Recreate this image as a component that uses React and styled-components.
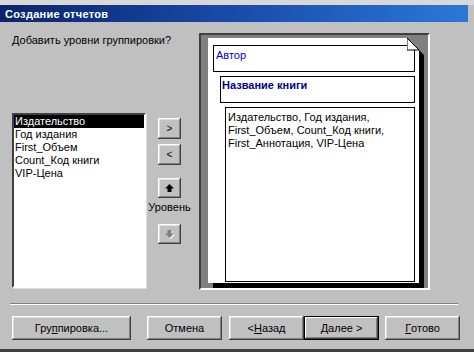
import React, { useState } from "react";
import styled, { createGlobalStyle } from "styled-components";

const GlobalStyle = createGlobalStyle`
  html, body { margin: 0; padding: 0; background: #c0c0c0; }
  * { box-sizing: border-box; }
`;

const Window = styled.div`
  width: 474px;
  height: 352px;
  background: #c0c0c0;
  border-top: 5px solid #d8d8d8;
  border-bottom: 3px solid #404040;
  display: flex;
  flex-direction: column;
  font-family: "Liberation Sans", Arial, sans-serif;
  font-size: 11px;
  color: #000;
`;

const TitleBar = styled.div`
  height: 17px;
  margin-right: 6px;
  padding-left: 5px;
  display: flex;
  align-items: center;
  background: linear-gradient(90deg, #0a246a 0%, #1a50b0 55%, #2a78d6 100%);
  color: #fff;
  font-weight: bold;
  font-size: 11px;
  letter-spacing: 0.3px;
`;

const Body = styled.div`
  display: flex;
  padding: 11px 0 0 12px;
`;

const LeftColumn = styled.div`
  width: 187px;
  display: flex;
  flex-direction: column;
`;

const Prompt = styled.div`
  line-height: 13px;
  margin-top: 1px;
`;

const ListRow = styled.div`
  display: flex;
  margin-top: 66px;
`;

const ListBox = styled.div`
  width: 134px;
  height: 175px;
  background: #fff;
  border-style: solid;
  border-width: 2px;
  border-color: #404040 #fff #fff #404040;
  box-shadow: 1px 1px 0 #dfdfdf;
  padding: 0;
`;

const ListItem = styled.div`
  height: 13px;
  line-height: 13px;
  padding-left: 1px;
  white-space: nowrap;
  background: ${(p) => (p.$selected ? "#000" : "transparent")};
  color: ${(p) => (p.$selected ? "#fff" : "#000")};
`;

const MoveColumn = styled.div`
  width: 47px;
  display: flex;
  flex-direction: column;
  align-items: center;
`;

const SmallButton = styled.div`
  width: 23px;
  height: ${(p) => p.$h || 21}px;
  margin-top: ${(p) => p.$mt || 0}px;
  background: #c0c0c0;
  box-shadow: inset -1px -1px #404040, inset 1px 1px #fff,
    inset -2px -2px #808080, inset 2px 2px #dfdfdf;
  display: flex;
  align-items: center;
  justify-content: center;
  font-size: 10px;
`;

const LevelLabel = styled.div`
  margin-top: 3px;
  line-height: 13px;
`;

const Preview = styled.div`
  width: 231px;
  height: 257px;
  background: #808080;
  border-style: solid;
  border-width: 2px;
  border-color: #404040 #fff #fff #404040;
  padding: 3px 0 0 7px;
`;

const Page = styled.div`
  position: relative;
  width: 211px;
  height: 245px;
  background: #fff;
  box-shadow: 5px 5px 0 #000;
  display: flex;
  flex-direction: column;
  padding: 7px 4px 0 5px;
`;

const Corner = styled.svg`
  position: absolute;
  right: -6px;
  top: 0;
`;

const Section = styled.div`
  margin-left: ${(p) => p.$indent}px;
  height: ${(p) => p.$h}px;
  flex: ${(p) => (p.$grow ? 1 : "none")};
  margin-bottom: ${(p) => (p.$grow ? 1 : 4)}px;
  border: 1px solid #000;
  padding: ${(p) => (p.$bold ? "2px 1px" : "3px 2px")};
  color: ${(p) => p.$color};
  font-weight: ${(p) => (p.$bold ? "bold" : "normal")};
  line-height: 13px;
`;

const Separator = styled.div`
  margin: 13px 16px 0 10px;
  height: 2px;
  border-top: 1px solid #808080;
  border-bottom: 1px solid #fff;
`;

const ButtonRow = styled.div`
  display: flex;
  margin-top: 11px;
  padding-left: 12px;
`;

const Button = styled.div`
  width: ${(p) => p.$w}px;
  height: 24px;
  margin-right: ${(p) => p.$gap || 0}px;
  background: #c0c0c0;
  display: flex;
  align-items: center;
  justify-content: center;
  box-shadow: ${(p) =>
    p.$default
      ? "inset 0 0 0 1px #000, inset -2px -2px #404040, inset 2px 2px #fff, inset -3px -3px #808080"
      : "inset -1px -1px #404040, inset 1px 1px #fff, inset -2px -2px #808080, inset 2px 2px #dfdfdf"};
  u { text-decoration: underline; }
`;

const items = ["Издательство", "Год издания", "First_Объем", "Count_Код книги", "VIP-Цена"];

function UpArrow({ color }) {
  return (
    <svg width="10" height="9" viewBox="0 0 10 9">
      <polygon points="4.5,0 9,4.5 6.5,4.5 6.5,8 2.5,8 2.5,4.5 0,4.5" fill={color} />
    </svg>
  );
}

function DownArrow() {
  return (
    <svg width="10" height="9" viewBox="0 0 10 9">
      <polygon points="3.5,1 7.5,1 7.5,4.5 10,4.5 5.5,9 1,4.5 3.5,4.5" fill="#fff" />
      <polygon points="2.5,0 6.5,0 6.5,3.5 9,3.5 4.5,8 0,3.5 2.5,3.5" fill="#808080" />
    </svg>
  );
}

function App() {
  const [selected] = useState(0);
  return (
    <Window>
      <GlobalStyle />
      <TitleBar>Создание отчетов</TitleBar>
      <Body>
        <LeftColumn>
          <Prompt>Добавить уровни группировки?</Prompt>
          <ListRow>
            <ListBox>
              {items.map((item, i) => (
                <ListItem key={item} $selected={i === selected}>
                  {item}
                </ListItem>
              ))}
            </ListBox>
            <MoveColumn>
              <SmallButton $mt={5}>&gt;</SmallButton>
              <SmallButton $mt={5}>&lt;</SmallButton>
              <SmallButton $mt={13} $h={20}>
                <UpArrow color="#000" />
              </SmallButton>
              <LevelLabel>Уровень</LevelLabel>
              <SmallButton $mt={10} $h={20}>
                <DownArrow />
              </SmallButton>
            </MoveColumn>
          </ListRow>
        </LeftColumn>
        <Preview>
          <Page>
            <Corner width="18" height="18" viewBox="0 0 18 18">
              <polygon points="0,0 18,0 18,18 12,12" fill="#808080" />
              <polygon points="0,0 12,12 0,12" fill="#fff" stroke="#000" strokeWidth="1" />
            </Corner>
            <Section $indent={0} $h={27} $color="#0000c8">Автор</Section>
            <Section $indent={7} $h={27} $color="#000090" $bold>
              Название книги
            </Section>
            <Section $indent={12} $grow $color="#000">
              Издательство, Год издания,
              <br />
              First_Объем, Count_Код книги,
              <br />
              First_Аннотация, VIP-Цена
            </Section>
          </Page>
        </Preview>
      </Body>
      <Separator />
      <ButtonRow>
        <Button $w={119} $gap={16}>
          Гру<u>п</u>пировка...
        </Button>
        <Button $w={75} $gap={7}>Отмена</Button>
        <Button $w={75}>
          &lt; <u>Н</u>азад
        </Button>
        <Button $w={75} $gap={6} $default>
          <u>Д</u>алее &gt;
        </Button>
        <Button $w={75}>
          <u>Г</u>отово
        </Button>
      </ButtonRow>
    </Window>
  );
}

export default App;
